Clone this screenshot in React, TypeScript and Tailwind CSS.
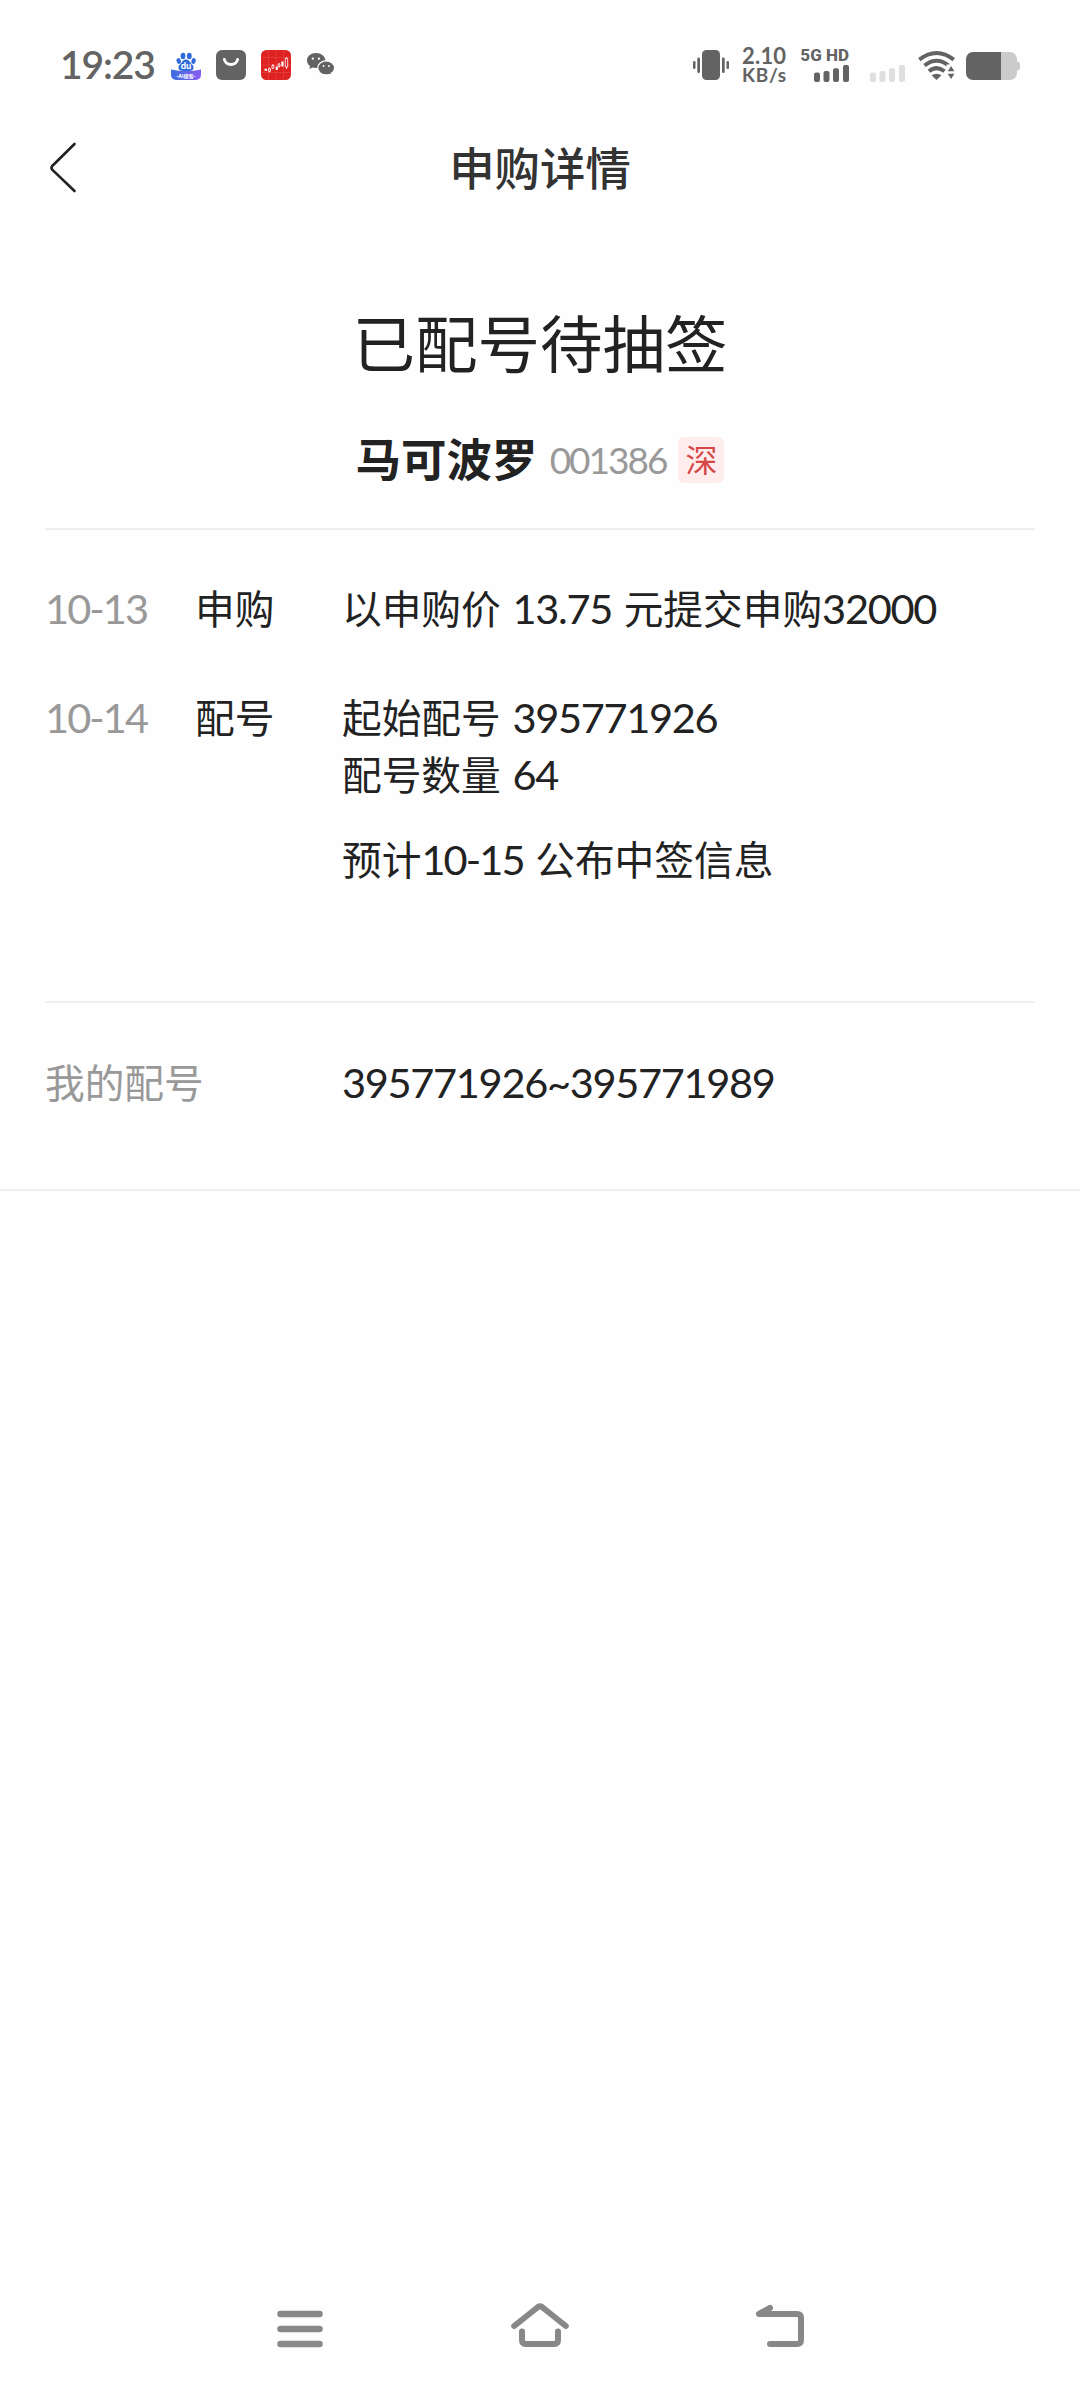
import type { ReactNode } from 'react';

interface TimelineEntry {
    date: string;
    label: string;
    lines: string[];
    note?: string;
}

const entries: TimelineEntry[] = [
    {
        date: '10-13',
        label: '申购',
        lines: ['以申购价 13.75 元提交申购32000'],
    },
    {
        date: '10-14',
        label: '配号',
        lines: ['起始配号 395771926', '配号数量 64'],
        note: '预计10-15 公布中签信息',
    },
];

// Digits are drawn a little larger than the Chinese text around them
function Mixed({ text }: { text: string }) {
    const parts = text.split(/([\d.~-]+)/).filter(Boolean);
    return (
        <>
            {parts.map((part, index) =>
                /^[\d.~-]+$/.test(part) ? (
                    <span
                        key={index}
                        className={
                            part.includes('-')
                                ? 'text-[41.5px] tracking-[-1.9px] tabular-nums'
                                : 'text-[41.5px] tracking-[-1.3px] tabular-nums'
                        }
                    >
                        {part}
                    </span>
                ) : (
                    <span key={index}>{part}</span>
                )
            )}
        </>
    );
}

function BaiduIcon() {
    return (
        <svg className="ml-[17px]" width="30" height="30" viewBox="0 0 30 30">
            <defs>
                <linearGradient id="ribbon" x1="0" x2="1" y1="0" y2="0">
                    <stop offset="0" stopColor="#3b6fe0" />
                    <stop offset="1" stopColor="#8a5cf0" />
                </linearGradient>
            </defs>
            <g fill="#2f6bdc">
                <ellipse cx="12" cy="6" rx="2.4" ry="3.2" />
                <ellipse cx="18.3" cy="6" rx="2.4" ry="3.2" />
                <ellipse cx="7.7" cy="11" rx="2.1" ry="2.9" transform="rotate(-15 7.7 11)" />
                <ellipse cx="22.6" cy="11" rx="2.1" ry="2.9" transform="rotate(15 22.6 11)" />
                <path d="M15 9.5c3 0 3.8 2.6 5.6 4.4 2 1.9 2.4 3.2 1.6 5.2-.6 1.4-2 1.9-4 1.9h-6.4c-2 0-3.4-.5-4-1.9-.8-2-.4-3.3 1.6-5.2C11.2 12.1 12 9.5 15 9.5z" />
            </g>
            <text x="15.1" y="18.5" textAnchor="middle" fontFamily="Inter, sans-serif" fontWeight="700" fontSize="8.5" fill="#fff">
                du
            </text>
            <path d="M0 19.5q15 3 30 0V25a5 5 0 0 1-5 5H5a5 5 0 0 1-5-5z" fill="url(#ribbon)" />
            <text x="15" y="27.8" textAnchor="middle" fontFamily="Inter, 'Noto Sans CJK SC', sans-serif" fontWeight="700" fontSize="5" fill="#fff">
                -AI搜索-
            </text>
        </svg>
    );
}

function BagIcon() {
    return (
        <svg className="ml-[15px]" width="30" height="30" viewBox="0 0 30 30">
            <rect width="30" height="30" rx="6" fill="#636363" />
            <path d="M8.3 9.3a6.8 6.3 0 0 0 13.4 0" fill="none" stroke="#fff" strokeWidth="2.8" strokeLinecap="round" />
        </svg>
    );
}

function StockIcon() {
    return (
        <svg className="ml-[15px]" width="30" height="30" viewBox="0 0 30 30">
            <rect width="30" height="30" rx="5.5" fill="#de2222" />
            <path d="M7.5 0v30M15 0v30M22.5 0v30M0 7.5h30M0 15h30M0 22.5h30" stroke="#e84a4a" strokeWidth="0.5" />
            <path d="M3.5 18.8h2.6v2H3.5zM14.8 16.5h2v3.5h-2zM20.3 11.5h2.2v5h-2.2z" fill="#fff" />
            <path
                d="M8.5 17.5v1.2M8.5 21.3v1.2M7.5 18.7h2v2.6h-2zM11.9 14v1.5M11.9 18.2v1M10.9 15.5h2v2.7h-2zM18 12.8v1.2M18 16.5v1.2M17.2 14h1.7v2.5h-1.7zM25.5 7v1.5M25.5 17v2M24.3 8.5h2.4v8.5h-2.4z"
                fill="none"
                stroke="#fff"
                strokeWidth="0.8"
            />
        </svg>
    );
}

function WechatIcon() {
    return (
        <svg className="ml-[15px]" width="30" height="30" viewBox="0 0 30 30">
            <path d="M10 3C4.8 3 1 6.4 1 10.5c0 2.3 1.2 4.4 3.1 5.7L3.3 19l3.2-1.5c1.1.3 2.3.5 3.5.5 5.2 0 9.3-3.3 9.3-7.5S15.2 3 10 3z" fill="#636363" />
            <path
                d="M20.2 10.9c-4.7 0-8.4 3.1-8.4 7 0 3.9 3.7 7 8.4 7 1 0 2-.2 2.9-.4l2.7 1.3-.7-2.4c2-1.3 3.5-3.2 3.5-5.5 0-3.9-3.7-7-8.4-7z"
                fill="#636363"
                stroke="#fff"
                strokeWidth="1.2"
            />
            <g fill="#fff">
                <circle cx="6.8" cy="8.7" r="1.1" />
                <circle cx="12.9" cy="8.7" r="1.1" />
                <circle cx="17.6" cy="16" r="0.9" />
                <circle cx="22.9" cy="16" r="0.9" />
            </g>
        </svg>
    );
}

function VibrateIcon() {
    return (
        <svg width="36" height="30" viewBox="0 0 36 30" fill="#636363">
            <rect x="9" width="18" height="30" rx="4.5" />
            <rect x="0" y="11" width="2.5" height="8" rx="1.2" />
            <rect x="4.3" y="7.5" width="2.7" height="15.5" rx="1.3" />
            <rect x="29" y="7.5" width="2.7" height="15.5" rx="1.3" />
            <rect x="33.5" y="11" width="2.5" height="8" rx="1.2" />
        </svg>
    );
}

function SignalBars({ className }: { className: string }) {
    return (
        <svg className={className} width="35" height="17" viewBox="0 0 35 17" fill="currentColor">
            <rect x="0" y="7.5" width="6" height="9.5" rx="2" />
            <rect x="9.5" y="6" width="6" height="11" rx="2" />
            <rect x="19" y="3.3" width="6" height="13.7" rx="2" />
            <rect x="29" y="0" width="6" height="17" rx="2" />
        </svg>
    );
}

function WifiIcon() {
    return (
        <svg className="ml-[13px]" width="38" height="30" viewBox="0 0 38 30">
            <g fill="none" stroke="#636363" strokeWidth="4">
                <path d="M1.3 9.7Q18.5-3.6 35.8 9.7" />
                <path d="M6.5 15.5Q18.5 6 30.6 15.5" />
                <path d="M11 21.3Q18.5 15 26.5 21.3" />
            </g>
            <path d="M13.5 25.3q5-3.3 10 0L18.500 30z" fill="#636363" />
            <path d="M28.5 14.5h9v15h-9z" fill="#fefefe" />
            <path d="M29.8 21.3l3.3-5.3 3.3 5.3zM29.8 23.7h6.6L33.1 29z" fill="#636363" />
        </svg>
    );
}

function BatteryIcon() {
    return (
        <svg className="ml-[10px] mt-[2px]" width="54" height="28" viewBox="0 0 54 28">
            <path d="M35 0h9a7 7 0 0 1 7 7v14a7 7 0 0 1-7 7h-9z" fill="#cbcbcb" />
            <path d="M51 9.5q3 .3 3 2.5v4q0 2.2-3 2.5z" fill="#cbcbcb" />
            <path d="M7 0h28v28H7a7 7 0 0 1-7-7V7a7 7 0 0 1 7-7z" fill="#636363" />
        </svg>
    );
}

function StatusBar() {
    return (
        <div className="flex h-[130px] items-center px-[60px] text-[#636363]">
            <span className="w-[94px] whitespace-nowrap pb-[2px] text-[39px] font-semibold leading-[40px] tracking-[-1.1px] tabular-nums">
                19:23
            </span>
            <BaiduIcon />
            <BagIcon />
            <StockIcon />
            <WechatIcon />
            <div className="ml-auto flex items-center">
                <VibrateIcon />
                <div className="ml-[13px] flex w-[46px] flex-col gap-[1px] whitespace-nowrap pt-[1px] font-bold">
                    <span className="text-[22px] leading-[18px] tracking-[0.2px]">2.10</span>
                    <span className="text-[19px] leading-[18px] tracking-[0.7px]">KB/s</span>
                </div>
                <div className="ml-[13px] flex w-[48px] flex-col items-end gap-[3px] pb-[1px]">
                    <span className="whitespace-nowrap font-['Roboto'] text-[17px] font-extrabold leading-[14px]">
                        5G HD
                    </span>
                    <SignalBars className="text-[#636363]" />
                </div>
                <SignalBars className="ml-[21px] mt-[16px] text-[#dfdfdf]" />
                <WifiIcon />
                <BatteryIcon />
            </div>
        </div>
    );
}

function Header() {
    return (
        <div className="grid h-[78px] grid-cols-[1fr_auto_1fr] items-center">
            <svg
                className="ml-[48px]"
                width="30"
                height="54"
                viewBox="0 0 30 54"
                fill="none"
                stroke="#222"
                strokeWidth="2.6"
                strokeLinecap="round"
                strokeLinejoin="round"
            >
                <path d="M26.5 2L4.200 24q-1.400 1.800 0 3.600L26.500 49" />
            </svg>
            <h1 className="text-[45.4px] font-medium leading-[60px] text-[#333]">申购详情</h1>
        </div>
    );
}

function Row({ date, label, children }: { date: string; label: string; children: ReactNode }) {
    return (
        <div className="flex">
            <div className="w-[150px] text-[#999]">
                <Mixed text={date} />
            </div>
            <div className="w-[147px]">{label}</div>
            <div className="flex-1 whitespace-nowrap">{children}</div>
        </div>
    );
}

function NavBar() {
    return (
        <div className="mt-auto flex h-[126px] items-center justify-center gap-[180px]">
            <svg width="60" height="60" viewBox="0 0 60 60" fill="none" stroke="#888" strokeWidth="6.5" strokeLinecap="round">
                <path d="M10.5 15h39M10.5 30h39M10.5 45h39" />
            </svg>
            <svg width="60" height="60" viewBox="0 0 60 60" fill="none" stroke="#888" strokeWidth="6" strokeLinecap="round" strokeLinejoin="round">
                <path d="M4.2 27L28 8q2-1.5 4 0L55.8 27" />
                <path d="M12 32.5V41q0 4 4 4h28q4 0 4-4v-8.5" />
            </svg>
            <svg width="60" height="60" viewBox="0 0 60 60" fill="none" stroke="#888" strokeWidth="6" strokeLinecap="round" strokeLinejoin="round">
                <path d="M20 9L9 15h38q4 0 4 4v22q0 4-4 4H20" />
            </svg>
        </div>
    );
}

export default function App() {
    return (
        <div className="flex h-[2392px] w-[1080px] flex-col bg-[#fefefe] font-['Lato','Noto_Sans_CJK_SC',sans-serif] text-[#222]">
            <StatusBar />
            <Header />

            <div className="flex flex-col px-[45px]">
                <h2 className="mt-[96px] text-center text-[62.5px] leading-[80px]">已配号待抽签</h2>
                <div className="mt-[44px] flex h-[64px] items-center justify-center">
                    <span className="text-[45.5px] font-bold leading-[60px]">马可波罗</span>
                    <span className="ml-[12px] text-[37px] leading-[60px] tracking-[-2px] text-[#999] tabular-nums">001386</span>
                    <span className="ml-[12px] flex h-[46px] w-[46px] items-center justify-center rounded-[6px] bg-[#ffeded] text-[32px] leading-[46px] text-[#d54848]">
                        深
                    </span>
                </div>

                <div className="mt-[36px] h-[2px] bg-[#eee]" />

                <div className="flex h-[471px] flex-col gap-[51.5px] pt-[50px] text-[39.7px] leading-[57px] [word-spacing:1.5px]">
                    {entries.map((entry) => (
                        <Row key={entry.date} date={entry.date} label={entry.label}>
                            {entry.lines.map((line) => (
                                <p key={line} className="h-[57px]">
                                    <Mixed text={line} />
                                </p>
                            ))}
                            {entry.note && (
                                <p className="mt-[28px] h-[57px]">
                                    <Mixed text={entry.note} />
                                </p>
                            )}
                        </Row>
                    ))}
                </div>

                <div className="h-[2px] bg-[#eee]" />

                <div className="flex h-[186px] pt-[51px] text-[39.7px] leading-[57px]">
                    <div className="w-[297px] text-[#999]">我的配号</div>
                    <div>
                        <Mixed text="395771926~395771989" />
                    </div>
                </div>
            </div>
            <div className="h-[2px] bg-[#eee]" />

            <NavBar />
        </div>
    );
}
